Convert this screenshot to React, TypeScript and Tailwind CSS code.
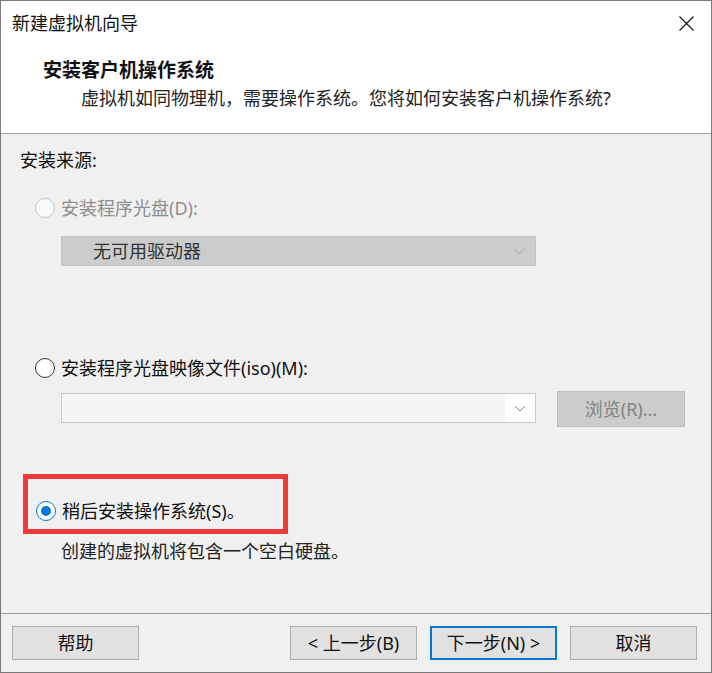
import React from "react";

function Radio({ state }: { state: "disabled" | "off" | "on" }) {
  if (state === "on") {
    return (
      <span className="flex h-[20px] w-[20px] shrink-0 items-center justify-center rounded-full border border-[#0078d7] bg-white">
        <span className="h-[10px] w-[10px] rounded-full bg-[#0078d7]" />
      </span>
    );
  }
  return (
    <span
      className={
        state === "disabled"
          ? "h-[20px] w-[20px] shrink-0 rounded-full border border-[#c6c6c6] bg-[#fafafa]"
          : "h-[20px] w-[20px] shrink-0 rounded-full border border-[#333333] bg-white"
      }
    />
  );
}

function Chevron({ color }: { color: string }) {
  return (
    <svg width="12" height="7" viewBox="0 0 12 7" fill="none">
      <path d="M1 1l5 5 5-5" stroke={color} strokeWidth="1" />
    </svg>
  );
}

function FooterButton({ label, primary }: { label: string; primary?: boolean }) {
  return (
    <button
      className={
        primary
          ? "flex h-[34px] w-[127px] items-center justify-center border-2 border-[#0078d7] bg-[#e1e1e1] text-[18px] text-[#111]"
          : "flex h-[34px] w-[127px] items-center justify-center border border-[#adadad] bg-[#e1e1e1] text-[18px] text-[#111]"
      }
    >
      {label}
    </button>
  );
}

export default function App() {
  return (
    <div className="flex h-[673px] w-[712px] flex-col border border-[#7a7a7a] bg-[#f0f0f0] font-['Noto_Sans','Noto_Sans_CJK_SC',sans-serif] text-[18px] leading-[24px] text-[#111]">
      {/* header */}
      <div className="h-[133px] shrink-0 border-b border-[#a0a0a0] bg-white">
        <div className="flex h-[44px] items-center justify-between pl-[11px] pr-[17px]">
          <span className="text-[18px]">新建虚拟机向导</span>
          <svg width="15" height="15" viewBox="0 0 15 15" fill="none">
            <path d="M0.5 0.5l14 14M14.5 0.5l-14 14" stroke="#111" strokeWidth="1.1" />
          </svg>
        </div>
        <div className="mt-[13px] pl-[42px] text-[19px] font-bold">安装客户机操作系统</div>
        <div className="mt-[4px] pl-[80px] text-[#222]">
          虚拟机如同物理机，需要操作系统。您将如何安装客户机操作系统?
        </div>
      </div>

      {/* body */}
      <div className="flex flex-1 flex-col">
        <div className="mt-[14px] pl-[19px]">安装来源:</div>

        <div className="mt-[24px] flex items-center gap-[6px] pl-[34px] text-[#8d8d8d]">
          <Radio state="disabled" />
          <span>安装程序光盘(D):</span>
        </div>

        <div className="ml-[60px] mt-[16px] flex h-[30px] w-[475px] items-center justify-between border border-[#c4c4c4] bg-[#cccccc] pl-[31px] pr-[10px] text-[#333]">
          <span>无可用驱动器</span>
          <Chevron color="#a8a8a8" />
        </div>

        <div className="mt-[90px] flex items-center gap-[6px] pl-[34px]">
          <Radio state="off" />
          <span>安装程序光盘映像文件(iso)(M):</span>
        </div>

        <div className="mt-[11px] flex items-start pl-[60px]">
          <div className="mt-[2px] flex h-[30px] w-[475px] border border-[#c8c8c8] bg-[#f5f5f5]">
            <div className="flex-1" />
            <div className="flex w-[30px] items-center justify-center bg-white">
              <Chevron color="#888" />
            </div>
          </div>
          <div className="ml-[21px] flex h-[36px] w-[128px] items-center justify-center border border-[#bfbfbf] bg-[#cccccc] text-[#838383]">
            浏览(R)...
          </div>
        </div>

        <div className="ml-[22px] mt-[47px] h-[60px] w-[265px] border-[5px] border-[#ef3a3a] pl-[8px] pt-[20px]">
          <div className="flex items-center gap-[6px]">
            <Radio state="on" />
            <span>稍后安装操作系统(S)。</span>
          </div>
        </div>

        <div className="mt-[5px] pl-[60px] text-[#222]">创建的虚拟机将包含一个空白硬盘。</div>
      </div>

      {/* footer */}
      <div className="flex h-[59px] shrink-0 items-start border-t border-[#a0a0a0] pt-[12px] pl-[11px] pr-[14px]">
        <FooterButton label="帮助" />
        <div className="flex-1" />
        <div className="flex gap-[13px]">
          <FooterButton label="< 上一步(B)" />
          <FooterButton label="下一步(N) >" primary />
          <FooterButton label="取消" />
        </div>
      </div>
    </div>
  );
}
